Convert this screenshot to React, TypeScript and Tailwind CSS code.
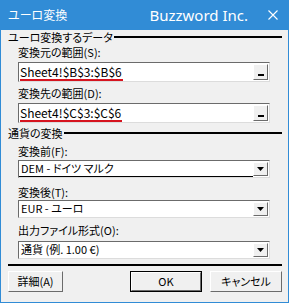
import React from 'react'

const jp = '"Noto Sans CJK JP", "Noto Sans", sans-serif'

function GroupHeader({ label }: { label: string }) {
  return (
    <div className="flex items-center h-[12px] leading-[12px]">
      <span className="text-[11px] text-black">{label}</span>
      <div className="flex-1 h-[2px] bg-black ml-px" />
    </div>
  )
}

function FieldLabel({ label }: { label: string }) {
  return <div className="pl-[10px] text-[11px] leading-[12px] h-[12px] text-black">{label}</div>
}

function RangeInput({ value }: { value: string }) {
  return (
    <div className="ml-[10px] mr-[12px] h-[20px] flex bg-white border border-t-[#6b6b6b] border-l-[#6b6b6b] border-r-[#dcdcdc] border-b-[#dcdcdc]">
      <div className="flex-1 pl-[1px] text-[12px] leading-[17px] text-black">
        <span className="relative">
          {value}
          <span className="absolute left-0 right-[-1px] bottom-[-1px] h-[2px] bg-[#d6141f]" />
        </span>
      </div>
      <div className="w-[15px] h-[16px] mt-px mr-px bg-[#f0f0f0] border border-t-white border-l-white border-r-[#6b6b6b] border-b-[#6b6b6b] flex items-end justify-center pb-[3px]">
        <div className="w-[6px] h-[2px] bg-black" />
      </div>
    </div>
  )
}

function Select({ value, focused }: { value: string; focused?: boolean }) {
  return (
    <div className="ml-[10px] mr-[12px] h-[18px] flex bg-white border border-t-[#6b6b6b] border-l-[#6b6b6b] border-r-[#dcdcdc] border-b-[#dcdcdc]">
      <div className={`flex-1 pl-[2px] text-[11px] leading-[15px] text-black ${focused ? 'border-b border-black' : ''}`}>
        {value}
      </div>
      <div className="w-[15px] h-[14px] mt-px mr-px bg-[#f0f0f0] border border-t-white border-l-white border-r-[#6b6b6b] border-b-[#6b6b6b] flex items-center justify-center">
        <svg width="7" height="4" viewBox="0 0 7 4">
          <path d="M0 0h7L3.5 4z" fill="#000" />
        </svg>
      </div>
    </div>
  )
}

function Button({ label, primary, className }: { label: string; primary?: boolean; className?: string }) {
  return (
    <div className={`h-[21px] ${primary ? 'border border-black' : ''} ${className ?? ''}`}>
      <div className="h-full bg-[#f0f0f0] border border-t-white border-l-white border-r-[#6b6b6b] border-b-[#6b6b6b] flex items-center justify-center text-[11px] text-black">
        {label}
      </div>
    </div>
  )
}

export default function App() {
  return (
    <div
      className="w-[289px] h-[303px] flex flex-col overflow-hidden [font-feature-settings:'palt']"
      style={{ fontFamily: jp }}
    >
      {/* Title bar */}
      <div className="h-[30px] bg-[#318cd6] flex items-center text-white shrink-0">
        <span className="pl-[8px] text-[12px]">ユーロ変換</span>
        <span className="ml-auto text-[15px]" style={{ fontFamily: '"Noto Sans", sans-serif' }}>
          Buzzword Inc.
        </span>
        <svg className="ml-[20px] mr-[11px]" width="10" height="10" viewBox="0 0 10 10">
          <path d="M0.5 0.5L9.5 9.5M9.5 0.5L0.5 9.5" stroke="#fff" strokeWidth="1.1" />
        </svg>
      </div>

      <div className="flex-1 bg-[#f0f0f0] border border-t-0 border-[#318cd6] pl-[7px] pr-[6px] pt-[1px] flex flex-col">
        <GroupHeader label="ユーロ変換するデータ" />
        <div className="h-[3px]" />
        <FieldLabel label="変換元の範囲(S):" />
        <div className="h-[4px]" />
        <RangeInput value="Sheet4!$B$3:$B$6" />
        <div className="h-[5px]" />
        <FieldLabel label="変換先の範囲(D):" />
        <div className="h-[4px]" />
        <RangeInput value="Sheet4!$C$3:$C$6" />
        <div className="h-[4px]" />
        <GroupHeader label="通貨の変換" />
        <div className="h-[6px]" />
        <FieldLabel label="変換前(F):" />
        <div className="h-[3px]" />
        <Select value="DEM - ドイツ マルク" focused />
        <div className="h-[8px]" />
        <FieldLabel label="変換後(T):" />
        <div className="h-[2px]" />
        <Select value="EUR - ユーロ" />
        <div className="h-[6px]" />
        <FieldLabel label="出力ファイル形式(O):" />
        <div className="h-[5px]" />
        <Select value="通貨 (例. 1.00 €)" />
        <div className="h-[5px]" />
        <div className="h-[2px] bg-black" />
        <div className="h-[5px]" />
        <div className="flex">
          <Button label="詳細(A)" className="w-[55px]" />
          <Button label="OK" primary className="w-[72px] ml-auto" />
          <Button label="キャンセル" className="w-[72px] ml-[8px]" />
        </div>
      </div>
    </div>
  )
}
